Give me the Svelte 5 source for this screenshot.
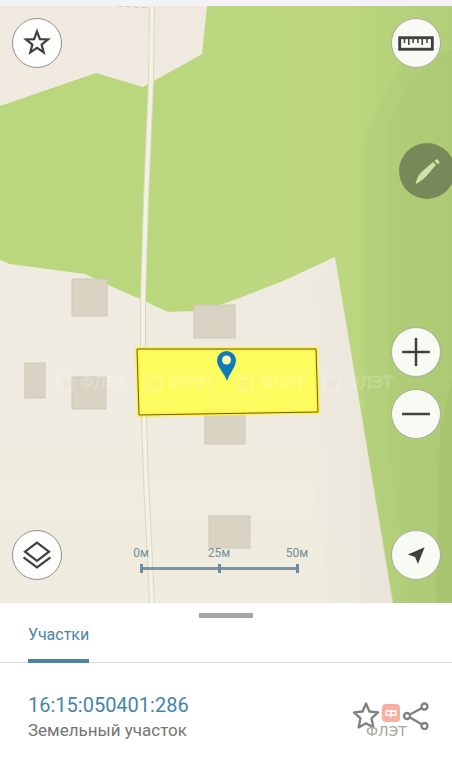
<script lang="ts">
  let activeTab = $state('parcels');

  const tabs = [{ id: 'parcels', label: 'Участки' }];

  const parcel = {
    number: '16:15:050401:286',
    kind: 'Земельный участок'
  };

  const scaleMarks = ['0м', '25м', '50м'];

  const buildings = [
    { x: 72, y: 279, w: 35, h: 37 },
    { x: 194, y: 305, w: 41, h: 33 },
    { x: 25, y: 363, w: 20, h: 35 },
    { x: 72, y: 377, w: 34, h: 32 },
    { x: 205, y: 409, w: 40, h: 35 },
    { x: 209, y: 516, w: 41, h: 32 }
  ];

  const watermarks = [57, 145, 236, 323];
</script>

<div class="screen">
  <div class="status-strip"></div>

  <main class="map">
    <svg class="map-canvas" viewBox="0 6 452 597" aria-hidden="true">
      <defs>
        <linearGradient id="land" x1="0" y1="0" x2="0" y2="1">
          <stop offset="0" stop-color="#f0e9df" />
          <stop offset="0.5" stop-color="#efebe1" />
          <stop offset="1" stop-color="#efecdf" />
        </linearGradient>
        <linearGradient id="forest" gradientUnits="userSpaceOnUse" x1="0" y1="0" x2="452" y2="0">
          <stop offset="0" stop-color="#b9d77c" />
          <stop offset="0.75" stop-color="#bcd780" />
          <stop offset="0.85" stop-color="#b7d37c" />
          <stop offset="1" stop-color="#b3ce79" />
        </linearGradient>
        <linearGradient id="shade" x1="0" y1="0" x2="1" y2="0">
          <stop offset="0" stop-color="#dcd5cf" stop-opacity="0" />
          <stop offset="1" stop-color="#dcd5cf" stop-opacity="0.3" />
        </linearGradient>
      </defs>

      <rect y="6" width="452" height="597" fill="url(#land)" />
      <path d="M335 257L393 603H330L290 300Z" fill="url(#shade)" />
      <path
        d="M0 106L96 73L143 87L202 54L207 6H452V603H393L392 596L335 257L283 281L226 303L193 311L168 312L140 299L106 284L85 274L10 264L0 260Z"
        fill="url(#forest)"
      />
      <path d="M370 123L390 86L400 62L452 50V603H392L364 430V140Z" fill="#a7c46f" opacity="0.2" />
      <path d="M387 125L412 78L452 50V603H410L388 450Z" fill="#a2c06c" opacity="0.15" />
      <path d="M440 430L452 380V603H436Z" fill="#92af5e" opacity="0.2" />

      <path d="M152 6L151 82L146 200L143 300V360L144 420L146 480L152 603" class="road-edge" />
      <path d="M152 6L151 82L146 200L143 300V360L144 420L146 480L152 603" class="road" />
      <path d="M118 6L134 7L150 8" class="fence" />

      {#each buildings as b}
        <rect x={b.x} y={b.y} width={b.w} height={b.h} class="building" />
      {/each}

      <path d="M137 349L316 349L318 412L139 415Z" class="parcel-glow" />
      <path d="M137 349L316 349L318 412L139 415Z" class="parcel-line" />

      {#each watermarks as x}
        <g class="watermark">
          <rect {x} y="375" width="17" height="17" rx="3" />
          <path d="M{x + 4} 381h9v5h-9zM{x + 8} 379v10" />
          <text x={x + 23} y="388">ФЛЭТ</text>
        </g>
      {/each}

      <path
        d="M227 381C225 374 217 367 217 360.500A9.500 9.500 0 0 1 236 360.500C236 367 229 374 227 381Z"
        fill="#107abb"
      />
      <circle cx="226.500" cy="360" r="4.500" fill="#fbf9b0" />
    </svg>

    <button class="round favorite" aria-label="Избранное">
      <svg viewBox="0 0 50 50">
        <path class="line" d="M25 13L28 20.900L36.400 21.300L29.800 26.600L32 34.700L25 30L18 34.700L20.200 26.600L13.600 21.300L22 20.900Z" />
      </svg>
    </button>

    <button class="round light ruler" aria-label="Линейка">
      <svg viewBox="0 0 50 50">
        <rect class="line thick" x="8" y="19.500" width="34" height="12" />
        <path class="line thin" d="M13 20v5M17.500 20v7M22 20v5M27 20v5M31.500 20v7M36.500 20v5" />
      </svg>
    </button>

    <button class="edit" aria-label="Редактировать">
      <svg viewBox="0 0 56 56">
        <path d="M16.500 40.500L18.500 35C19.500 32.500 20.500 31 22.500 29L34 19L37 22L27 33.500C25 35.500 23.500 36.500 21.500 38L17.500 40.800Z" />
        <path d="M35.500 18L37 16.500Q38 15.800 39 16.800L40 18.300Q41 19.500 40.200 20.500L38.500 21Z" />
      </svg>
    </button>

    <div class="zoom">
      <button class="round light" aria-label="Приблизить">
        <svg viewBox="0 0 50 50"><path class="line bold" d="M25 10.500v29M10.500 25h29" /></svg>
      </button>
      <button class="round light" aria-label="Отдалить">
        <svg viewBox="0 0 50 50"><path class="line bold" d="M10.500 25h29" /></svg>
      </button>
    </div>

    <button class="round layers" aria-label="Слои">
      <svg viewBox="0 0 50 50">
        <path class="line" d="M25 12L37.500 21.500L25 31L12.500 21.500Z" />
        <path class="line" d="M11 27.500L25 38L39 27.500" />
      </svg>
    </button>

    <button class="round light locate" aria-label="Моё местоположение">
      <svg viewBox="0 0 50 50"><path d="M34 17L27 34.500L24 27L16.500 24.500Z" fill="#404040" /></svg>
    </button>

    <div class="scale">
      {#each scaleMarks as mark}
        <span class="scale-mark">{mark}</span>
      {/each}
    </div>
  </main>

  <section class="sheet">
    <div class="handle"></div>

    <nav class="tabs">
      {#each tabs as tab}
        <button class="tab" class:active={activeTab === tab.id} onclick={() => (activeTab = tab.id)}>
          {tab.label}
        </button>
      {/each}
    </nav>

    <div class="result">
      <div class="info">
        <a class="number" href="#parcel">{parcel.number}</a>
        <span class="kind">{parcel.kind}</span>
      </div>

      <div class="actions">
        <button class="action" aria-label="В избранное">
          <svg viewBox="0 0 28 28">
            <path d="M14 1.500L17.400 9.500L26 10.400L19.500 16.300L21.400 25.400L14 21.300L6.600 25.400L8.500 16.300L2 10.400L10.600 9.500Z" />
          </svg>
        </button>
        <span class="badge">
          <svg viewBox="0 0 18 18"><path d="M4 7h10v4H4zM9 6v8" /></svg>
        </span>
        <button class="action" aria-label="Поделиться">
          <svg viewBox="0 0 28 28">
            <path d="M8 12.500L20 6M8 15.500L20 22.500" />
            <circle cx="5" cy="14" r="3" />
            <circle cx="22.500" cy="4.500" r="3" />
            <circle cx="22.500" cy="24" r="3" />
          </svg>
        </button>
        <span class="brand">ФЛЭТ</span>
      </div>
    </div>
  </section>
</div>

<style>
  :global(body) {
    background: #fff;
  }

  .screen {
    font-family: Roboto, 'Noto Sans', sans-serif;
    background: #fff;
  }

  button {
    padding: 0;
    border: none;
    background: transparent;
    font: inherit;
    cursor: pointer;
  }

  button svg {
    display: block;
    width: 100%;
    height: 100%;
  }

  .status-strip {
    height: 6px;
    background: #f3f2f6;
  }

  /* Map */
  .map {
    position: relative;
    overflow: hidden;
  }

  .map-canvas {
    display: block;
    width: 100%;
    height: auto;
  }

  .road-edge,
  .road {
    fill: none;
    stroke: #dad8c4;
    stroke-width: 6;
  }

  .road {
    stroke: #f3f1df;
    stroke-width: 4;
  }

  .fence {
    fill: none;
    stroke: #cbc6bd;
    stroke-width: 1;
    stroke-dasharray: 5 3;
  }

  .building {
    fill: #d9d3c3;
    stroke: #cdc8b8;
    stroke-width: 1;
  }

  .parcel-glow {
    fill: #ffff48;
    fill-opacity: 0.86;
    stroke: #fff04a;
    stroke-width: 4;
  }

  .parcel-line {
    fill: none;
    stroke: #6b5f0c;
    stroke-width: 1;
  }

  .watermark {
    opacity: 0.22;
  }

  .watermark rect {
    fill: #fff;
    fill-opacity: 0.4;
    stroke: #fff;
  }

  .watermark path {
    fill: none;
    stroke: #d8d4b8;
  }

  .watermark text {
    fill: none;
    stroke: #fff;
    font-family: 'DejaVu Sans', sans-serif;
    font-size: 16px;
  }

  .round {
    display: block;
    box-sizing: border-box;
    width: 50px;
    height: 50px;
    border: 1px solid #8f8f8f;
    border-radius: 50%;
    background: #fdfdfb;
  }

  .light {
    border-color: #a5ab9b;
    background: #f8fbf3;
  }

  .line {
    fill: none;
    stroke: #404040;
    stroke-width: 2.3;
  }

  .bold {
    stroke-width: 2.6;
  }

  .thick {
    stroke-width: 3;
  }

  .thin {
    stroke-width: 1.6;
  }

  .favorite,
  .ruler,
  .layers,
  .locate,
  .edit,
  .zoom,
  .scale {
    position: absolute;
  }

  .favorite {
    top: 12px;
    left: 12px;
  }

  .ruler {
    top: 12px;
    right: 11px;
  }

  .edit {
    top: 137px;
    right: -3px;
    width: 56px;
    height: 56px;
    border-radius: 50%;
    background: #778958;
  }

  .edit path {
    fill: #cfe3a6;
  }

  .zoom {
    top: 321px;
    right: 11px;
    display: flex;
    flex-direction: column;
    gap: 12px;
  }

  .layers {
    bottom: 23px;
    left: 12px;
  }

  .locate {
    right: 11px;
    bottom: 23px;
  }

  .scale {
    bottom: 30px;
    left: 102px;
    display: grid;
    grid-template-columns: repeat(3, 78px);
    color: #768d9b;
    font-size: 12px;
    line-height: 14px;
    text-align: center;
  }

  .scale-mark::after {
    content: '';
    display: block;
    height: 9px;
    margin-top: 4px;
    background:
      linear-gradient(#6f8c9e, #6f8c9e) center / 3px 9px no-repeat,
      linear-gradient(#7c94a3, #7c94a3) center / 100% 3px no-repeat;
  }

  .scale-mark:first-child::after {
    background:
      linear-gradient(#6f8c9e, #6f8c9e) center / 3px 9px no-repeat,
      linear-gradient(#7c94a3, #7c94a3) right center / 50% 3px no-repeat;
  }

  .scale-mark:last-child::after {
    background:
      linear-gradient(#6f8c9e, #6f8c9e) center / 3px 9px no-repeat,
      linear-gradient(#7c94a3, #7c94a3) left center / 50% 3px no-repeat;
  }

  /* Bottom sheet */
  .sheet {
    padding-top: 10px;
  }

  .handle {
    width: 54px;
    height: 5px;
    margin: 0 auto;
    background: #a5a5a5;
  }

  .tabs {
    display: flex;
    padding: 0 28px;
    box-shadow: inset 0 -1px #dfdfdf;
  }

  .tab {
    padding: 6px 0 14px;
    border-bottom: 4px solid transparent;
    color: #777;
    font-size: 16px;
    line-height: 21px;
  }

  .tab.active {
    border-color: #4d86a5;
    color: #4d86a5;
  }

  .result {
    display: flex;
    align-items: flex-start;
    justify-content: space-between;
    padding: 29px 22px 24px 28px;
  }

  .info {
    display: flex;
    flex-direction: column;
  }

  .number {
    color: #4585a9;
    font-size: 20px;
    line-height: 26px;
    text-decoration: none;
  }

  .kind {
    color: #757575;
    font-size: 17px;
    line-height: 24px;
  }

  .actions {
    position: relative;
    display: flex;
    align-items: flex-start;
    gap: 2px;
    padding-top: 10px;
  }

  .action {
    width: 28px;
    height: 28px;
  }

  .action path,
  .action circle {
    fill: none;
    stroke: #808080;
    stroke-width: 2.3;
    stroke-linejoin: round;
  }

  .badge {
    width: 18px;
    height: 18px;
    margin-top: 2px;
    border-radius: 4px;
    background: #f8afa2;
  }

  .badge svg {
    display: block;
  }

  .badge path {
    fill: none;
    stroke: #fff;
    stroke-width: 1.4;
  }

  .brand {
    position: absolute;
    top: 32px;
    left: 14px;
    color: #aaa698;
    font-family: 'DejaVu Sans', sans-serif;
    font-size: 14px;
    line-height: 14px;
  }
</style>
